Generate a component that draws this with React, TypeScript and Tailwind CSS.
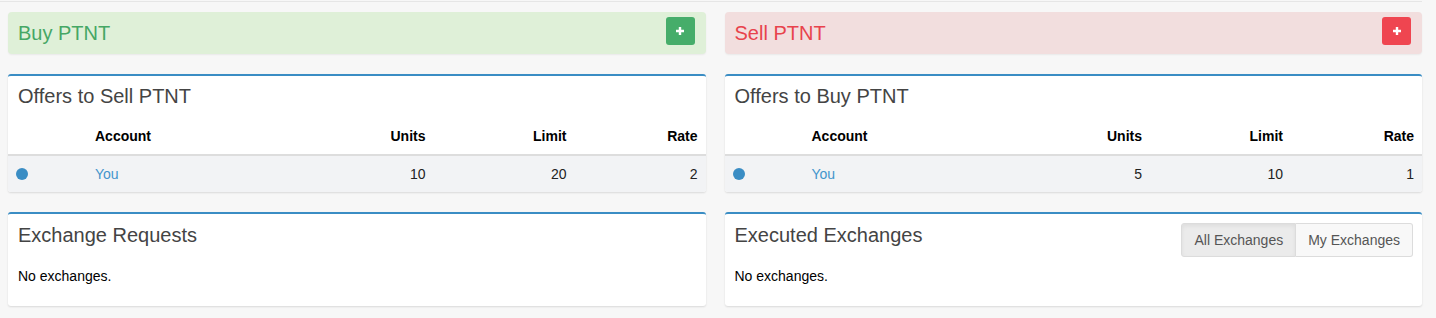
import React from 'react';

interface Offer {
  account: string;
  units: number;
  limit: number;
  rate: number;
}

const sellOffers: Offer[] = [{ account: 'You', units: 10, limit: 20, rate: 2 }];
const buyOffers: Offer[] = [{ account: 'You', units: 5, limit: 10, rate: 1 }];

function PlusIcon() {
  return (
    <svg width="10" height="10" viewBox="0 0 10 10">
      <path d="M5 1v8M1 5h8" stroke="white" strokeWidth="2.4" />
    </svg>
  );
}

function ActionBar({ label, tone }: { label: string; tone: 'buy' | 'sell' }) {
  const box = tone === 'buy' ? 'bg-[#dff0d8] text-[#45a765]' : 'bg-[#f2dede] text-[#e8434c]';
  const btn = tone === 'buy' ? 'bg-[#46ad6a]' : 'bg-[#ef4550]';
  return (
    <div className={`flex h-[42px] items-start justify-between rounded-[4px] pl-[10px] pr-[11px] shadow-[0_1px_2px_rgba(0,0,0,0.06)] ${box}`}>
      <span className="self-center text-[20px] leading-[22px]">{label}</span>
      <button className={`mt-[5px] flex h-[28px] w-[29px] items-center justify-center rounded-[3px] ${btn}`}>
        <PlusIcon />
      </button>
    </div>
  );
}

function Panel({ children }: { children: React.ReactNode }) {
  return (
    <div className="self-start rounded-[3px] border-t-2 border-[#3a8dc4] bg-white shadow-[0_1px_2px_rgba(0,0,0,0.12)]">
      {children}
    </div>
  );
}

const cols = 'grid grid-cols-[79px_1fr_140px_141px_131px]';

function OffersPanel({ title, offers }: { title: string; offers: Offer[] }) {
  return (
    <Panel>
      <h3 className="px-[10px] pt-[9px] pb-[11px] text-[20px] leading-[22px] text-[#444]">{title}</h3>
      <div className={`${cols} border-b-2 border-[#dddddd] text-[14px] font-bold leading-[20px] text-black`}>
        <div className="p-[8px]"></div>
        <div className="p-[8px]">Account</div>
        <div className="p-[8px] text-right">Units</div>
        <div className="p-[8px] text-right">Limit</div>
        <div className="p-[8px] text-right">Rate</div>
      </div>
      {offers.map((o, i) => (
        <div key={i} className={`${cols} rounded-b-[3px] bg-[#f2f3f5] text-[14px] leading-[20px] text-[#222]`}>
          <div className="flex items-center p-[8px]">
            <span className="h-[12px] w-[12px] rounded-full bg-[#3a8dc4]"></span>
          </div>
          <div className="p-[8px] text-[#4395cc]">{o.account}</div>
          <div className="p-[8px] text-right">{o.units}</div>
          <div className="p-[8px] text-right">{o.limit}</div>
          <div className="p-[8px] text-right">{o.rate}</div>
        </div>
      ))}
    </Panel>
  );
}

function ExchangesPanel({ title, tabs }: { title: string; tabs?: boolean }) {
  return (
    <Panel>
      <div className="flex h-[32px] items-start justify-between">
        <h3 className="px-[10px] pt-[10px] text-[20px] leading-[22px] text-[#444]">{title}</h3>
        {tabs && (
          <div className="mt-[9px] mr-[9px] flex text-[14px] leading-[20px] text-[#555]">
            <button className="rounded-l-[3px] border border-[#dcdcdc] bg-[#ebebeb] px-[12px] py-[6px] shadow-[inset_0_2px_4px_rgba(0,0,0,0.06)]">
              All Exchanges
            </button>
            <button className="rounded-r-[3px] border border-l-0 border-[#dcdcdc] bg-[#f8f8f8] px-[12px] py-[6px]">
              My Exchanges
            </button>
          </div>
        )}
      </div>
      <p className="px-[10px] pt-[20px] pb-[20px] text-[14px] leading-[20px] text-black">No exchanges.</p>
    </Panel>
  );
}

export default function App() {
  return (
    <div className="h-[318px] w-full bg-[#f7f7f7]" style={{ fontFamily: '"Liberation Sans", Arial, sans-serif' }}>
      <div className="h-[2px] w-[1422px] border-b border-[#e6e6e6]"></div>
      <div className="grid w-[1422px] grid-cols-2 gap-x-[19px] gap-y-[20px] pt-[10px] pl-[8px]">
        <ActionBar label="Buy PTNT" tone="buy" />
        <ActionBar label="Sell PTNT" tone="sell" />
        <OffersPanel title="Offers to Sell PTNT" offers={sellOffers} />
        <OffersPanel title="Offers to Buy PTNT" offers={buyOffers} />
        <ExchangesPanel title="Exchange Requests" />
        <ExchangesPanel title="Executed Exchanges" tabs />
      </div>
    </div>
  );
}
